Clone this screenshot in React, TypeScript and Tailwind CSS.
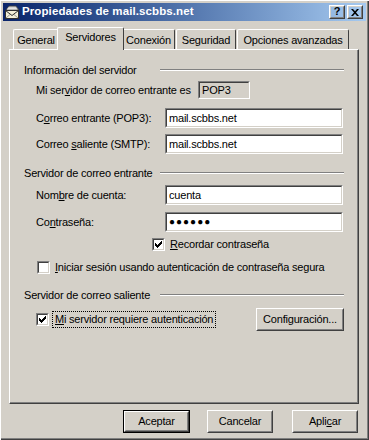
import React from "react";

// Cuadro de propiedades de cuenta de correo, estilo Windows clásico

const FONT = { fontFamily: '"Liberation Sans", Arial, sans-serif' };

function U({ children }: { children: React.ReactNode }) {
  return <span className="underline underline-offset-[1px]">{children}</span>;
}

// ── Caja de texto hundida ────────────────────────────────────────────────────
function Field({ value, gray = false, className = "", valueClass = "" }: {
  value: string; gray?: boolean; className?: string; valueClass?: string;
}) {
  return (
    <div className={`border border-t-[#808080] border-l-[#808080] border-r-white border-b-white ${className}`}>
      <div className={`h-full border border-t-[#404040] border-l-[#404040] border-r-[#d4d0c8] border-b-[#d4d0c8] flex items-center pl-[2px] ${gray ? "bg-[#d4d0c8]" : "bg-white"}`}>
        <span className={valueClass}>{value}</span>
      </div>
    </div>
  );
}

function Check({ checked }: { checked: boolean }) {
  return (
    <div className="w-[13px] h-[13px] shrink-0 border border-t-[#808080] border-l-[#808080] border-r-white border-b-white">
      <div className="w-full h-full bg-white border border-t-[#404040] border-l-[#404040] border-r-[#d4d0c8] border-b-[#d4d0c8] flex items-center justify-center">
        {checked && (
          <svg width="7" height="7" viewBox="0 0 7 7">
            <path d="M0 2h1v1h1v1h1V3h1V2h1V1h1V0h1v3h-1v1h-1v1h-1v1h-1v1H2V6H1V5H0z" fill="#000" />
          </svg>
        )}
      </div>
    </div>
  );
}

function Btn({ children, isDefault = false, className = "" }: { children: React.ReactNode; isDefault?: boolean; className?: string }) {
  const inner = (
    <div className="h-full border border-t-white border-l-white border-r-[#404040] border-b-[#404040]">
      <div className="h-full flex items-center justify-center border border-t-[#d4d0c8] border-l-[#d4d0c8] border-r-[#808080] border-b-[#808080]">
        {children}
      </div>
    </div>
  );
  if (isDefault) return <div className={`border border-black ${className}`}>{inner}</div>;
  return <div className={className}>{inner}</div>;
}

function GroupHeader({ label, className = "" }: { label: string; className?: string }) {
  return (
    <div className={`flex items-center h-[14px] pl-[14px] pr-[14px] ${className}`}>
      <span className="w-[136px] shrink-0">{label}</span>
      <div className="flex-1 border-t border-t-[#808080] border-b border-b-white" />
    </div>
  );
}

function Row({ label, value, className = "", valueClass = "" }: {
  label: React.ReactNode; value: string; className?: string; valueClass?: string;
}) {
  return (
    <div className={`flex items-center h-[20px] pl-[26px] ${className}`}>
      <span className="w-[129px] shrink-0">{label}</span>
      <Field value={value} valueClass={valueClass} className="w-[178px] h-[20px]" />
    </div>
  );
}

function Tab({ label, active = false, className = "" }: { label: string; active?: boolean; className?: string }) {
  return (
    <div
      className={`relative flex items-center justify-center bg-[#d4d0c8] border-l border-t border-r border-l-white border-t-white border-r-[#404040] rounded-tl-[2px] rounded-tr-[2px] ${
        active ? "h-[23px] z-10 -mx-[2px] -mb-px pb-[3px]" : "h-[20px] pt-[1px]"
      } ${className}`}
    >
      {label}
    </div>
  );
}

export default function App() {
  return (
    <div
      className="w-[369px] h-[440px] bg-[#d4d0c8] text-[11px] tracking-[-0.2px] text-black leading-none flex flex-col px-[3px] pt-[3px] shadow-[inset_1px_1px_#fff,inset_-1px_-1px_#404040,inset_-2px_-2px_#808080]"
      style={FONT}
    >
      {/* Barra de título */}
      <div className="h-[18px] flex items-center bg-gradient-to-r from-[#0a246a] to-[#a6caf0] pl-[1px] pr-[3px]">
        <svg width="16" height="16" viewBox="0 0 16 16" className="shrink-0">
          <path d="M2 6L5 2h7l3 4z" fill="#c0c0c0" stroke="#404040" strokeWidth="0.8" />
          <path d="M4 4h8M3 5h10" stroke="#fff" strokeWidth="0.7" />
          <rect x="1.5" y="6.5" width="13" height="8" fill="#f4f0d8" stroke="#303030" />
          <path d="M1.5 6.5l6.5 5 6.5-5" fill="none" stroke="#303030" />
          <path d="M2 14l4-3.5M14 14l-4-3.5" stroke="#808080" strokeWidth="0.8" />
        </svg>
        <span className="ml-[2px] font-bold text-white text-[11.5px] tracking-[0.1px]">Propiedades de mail.scbbs.net</span>
        <div className="ml-auto flex items-center">
          <Btn className="w-[16px] h-[14px]">
            <span className="font-bold text-[11px] leading-none -mt-px">?</span>
          </Btn>
          <Btn className="w-[16px] h-[14px] ml-[2px]">
            <svg width="8" height="7" viewBox="0 0 8 7">
              <path d="M0 0h2l2 2.2L6 0h2L5 3.5 8 7H6L4 4.8 2 7H0l3-3.5z" fill="#000" />
            </svg>
          </Btn>
        </div>
      </div>

      {/* Pestañas */}
      <div className="mt-[6px] pl-[10px] flex items-end h-[22px]">
        <Tab label="General" className="w-[46px]" />
        <Tab label="Servidores" active className="w-[67px]" />
        <Tab label="Conexión" className="w-[53px]" />
        <Tab label="Seguridad" className="w-[60px] ml-px" />
        <Tab label="Opciones avanzadas" className="w-[112px] ml-px" />
      </div>

      {/* Panel */}
      <div className="ml-[6px] w-[350px] h-[355px] flex flex-col border border-t-white border-l-white border-r-[#404040] border-b-[#404040] shadow-[inset_-1px_-1px_#808080]">
        <GroupHeader label="Información del servidor" className="mt-[13px]" />

        <div className="flex items-center h-[18px] pl-[26px] mt-[4px]">
          <span className="w-[162px] shrink-0">
            Mi ser<U>v</U>idor de correo entrante es
          </span>
          <Field value="POP3" gray className="w-[52px] h-[18px]" />
        </div>

        <Row label={<>C<U>o</U>rreo entrante (POP3):</>} value="mail.scbbs.net" className="mt-[9px]" />
        <Row label={<>Correo <U>s</U>aliente (SMTP):</>} value="mail.scbbs.net" className="mt-[6px]" />

        <GroupHeader label="Servidor de correo entrante" className="mt-[12px]" />
        <Row label={<>Nom<U>b</U>re de cuenta:</>} value="cuenta" className="mt-[5px]" />
        <Row
          label={<>Co<U>n</U>traseña:</>}
          value="●●●●●●"
          valueClass="text-[10px] tracking-[1px]"
          className="mt-[7px]"
        />

        <div className="flex items-center h-[13px] mt-[6px] pl-[142px] gap-[5px]">
          <Check checked />
          <span><U>R</U>ecordar contraseña</span>
        </div>

        <div className="flex items-center h-[13px] mt-[10px] pl-[27px] gap-[5px]">
          <Check checked={false} />
          <span><U>I</U>niciar sesión usando autenticación de contraseña segura</span>
        </div>

        <GroupHeader label="Servidor de correo saliente" className="mt-[14px]" />

        <div className="flex items-center h-[23px] mt-[6px] pl-[26px] pr-[14px]">
          <Check checked />
          <span className="ml-[3px] px-[2px] py-[2px] border border-dotted border-black">
            <U>M</U>i servidor requiere autenticación
          </span>
          <Btn className="ml-auto w-[88px] h-[23px]">Configuración...</Btn>
        </div>
      </div>

      {/* Botones */}
      <div className="flex items-center mt-[6px] pl-[120px] h-[23px]">
        <Btn isDefault className="w-[67px] h-[23px]">Aceptar</Btn>
        <Btn className="w-[66px] h-[23px] ml-[17px]">Cancelar</Btn>
        <Btn className="w-[66px] h-[23px] ml-[19px]">Apli<U>c</U>ar</Btn>
      </div>
    </div>
  );
}
